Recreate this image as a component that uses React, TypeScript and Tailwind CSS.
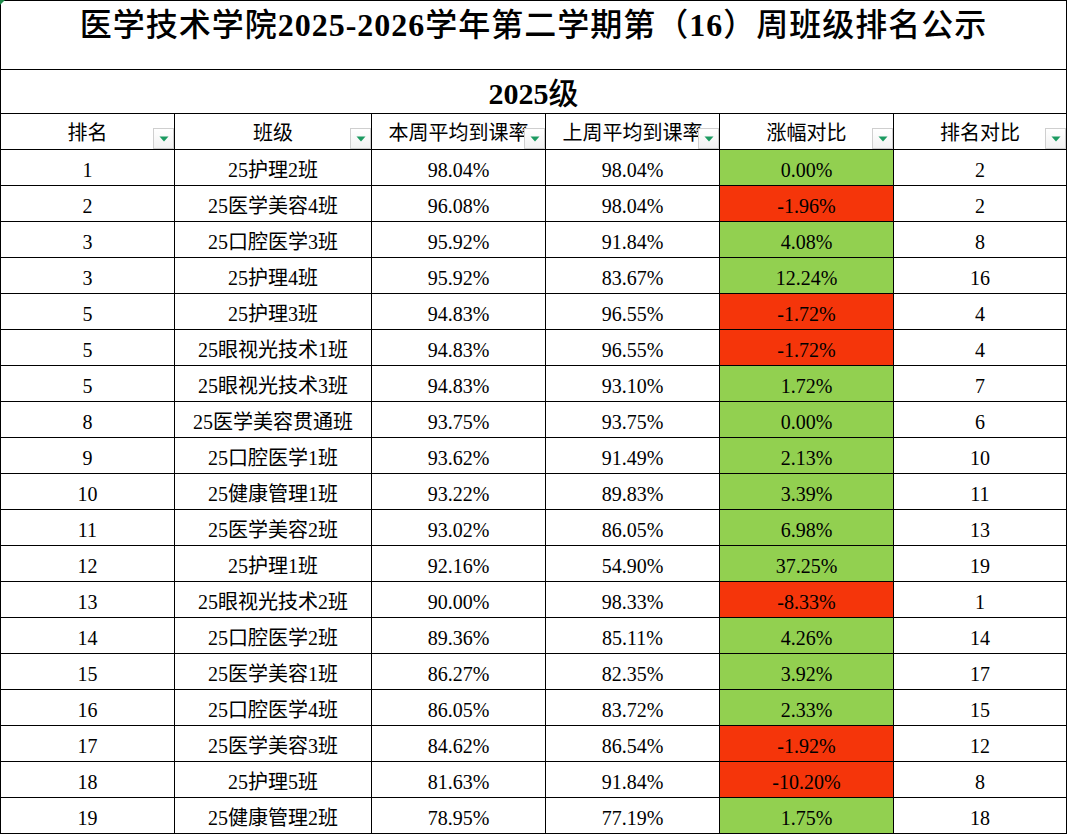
import React from "react";

type Row = [string, string, string, string, string, boolean, string];

const rows: Row[] = [
  ["1", "25护理2班", "98.04%", "98.04%", "0.00%", true, "2"],
  ["2", "25医学美容4班", "96.08%", "98.04%", "-1.96%", false, "2"],
  ["3", "25口腔医学3班", "95.92%", "91.84%", "4.08%", true, "8"],
  ["3", "25护理4班", "95.92%", "83.67%", "12.24%", true, "16"],
  ["5", "25护理3班", "94.83%", "96.55%", "-1.72%", false, "4"],
  ["5", "25眼视光技术1班", "94.83%", "96.55%", "-1.72%", false, "4"],
  ["5", "25眼视光技术3班", "94.83%", "93.10%", "1.72%", true, "7"],
  ["8", "25医学美容贯通班", "93.75%", "93.75%", "0.00%", true, "6"],
  ["9", "25口腔医学1班", "93.62%", "91.49%", "2.13%", true, "10"],
  ["10", "25健康管理1班", "93.22%", "89.83%", "3.39%", true, "11"],
  ["11", "25医学美容2班", "93.02%", "86.05%", "6.98%", true, "13"],
  ["12", "25护理1班", "92.16%", "54.90%", "37.25%", true, "19"],
  ["13", "25眼视光技术2班", "90.00%", "98.33%", "-8.33%", false, "1"],
  ["14", "25口腔医学2班", "89.36%", "85.11%", "4.26%", true, "14"],
  ["15", "25医学美容1班", "86.27%", "82.35%", "3.92%", true, "17"],
  ["16", "25口腔医学4班", "86.05%", "83.72%", "2.33%", true, "15"],
  ["17", "25医学美容3班", "84.62%", "86.54%", "-1.92%", false, "12"],
  ["18", "25护理5班", "81.63%", "91.84%", "-10.20%", false, "8"],
  ["19", "25健康管理2班", "78.95%", "77.19%", "1.75%", true, "18"],
];

const headers = ["排名", "班级", "本周平均到课率", "上周平均到课率", "涨幅对比", "排名对比"];

function FilterButton() {
  return (
    <div className="absolute right-0 bottom-0 w-[21px] h-[21px] border border-[#cfcfcf] bg-gradient-to-b from-white to-[#f2f2f2] flex items-center justify-center">
      <svg width="10" height="6" viewBox="0 0 10 6">
        <polygon points="0.5,0.5 9.5,0.5 5,5.5" fill="#1b9a60" />
      </svg>
    </div>
  );
}

const grid = "grid grid-cols-[174px_197px_174px_174px_174px_173px]";

export default function App() {
  return (
    <div className="bg-white text-black font-['Liberation_Serif','Noto_Sans_CJK_SC',serif]">
      <div className="relative w-[1067px]">
        <svg className="absolute left-0 top-0" width="5" height="5" viewBox="0 0 5 5">
          <polygon points="0,0 5,0 0,5" fill="#1e8a4a" />
        </svg>
        <div className="h-[70px] border border-black flex justify-center pt-[7px]">
          <span className="text-[32px] leading-[34px] font-medium tracking-[1px]">
            医学技术学院<span className="font-bold">2025-2026</span>学年第二学期第（<span className="font-bold">16</span>）周班级排名公示
          </span>
        </div>
        <div className="h-[44px] border-x border-b border-black flex items-center justify-center pt-[5px]">
          <span className="text-[30px] leading-[32px] font-medium">
            <span className="font-bold">2025</span>级
          </span>
        </div>
        <div className={`${grid} border-l border-black`}>
          {headers.map((h, i) => (
            <div
              key={i}
              className="relative h-[36px] border-r border-b border-black overflow-hidden flex items-center justify-center pt-[3px] whitespace-nowrap text-[20px] leading-[24px]"
            >
              <span>{h}</span>
              <FilterButton />
            </div>
          ))}
        </div>
        {rows.map((r, ri) => (
          <div key={ri} className={`${grid} border-l border-black`}>
            {[r[0], r[1], r[2], r[3], r[4], r[6]].map((c, ci) => (
              <div
                key={ci}
                className={`h-[36px] border-r border-b border-black flex items-center justify-center pt-[4px] whitespace-nowrap text-[20px] leading-[24px] ${
                  ci === 4 ? (r[5] ? "bg-[#92d050]" : "bg-[#f5350a]") : ""
                }`}
              >
                {c}
              </div>
            ))}
          </div>
        ))}
      </div>
    </div>
  );
}
